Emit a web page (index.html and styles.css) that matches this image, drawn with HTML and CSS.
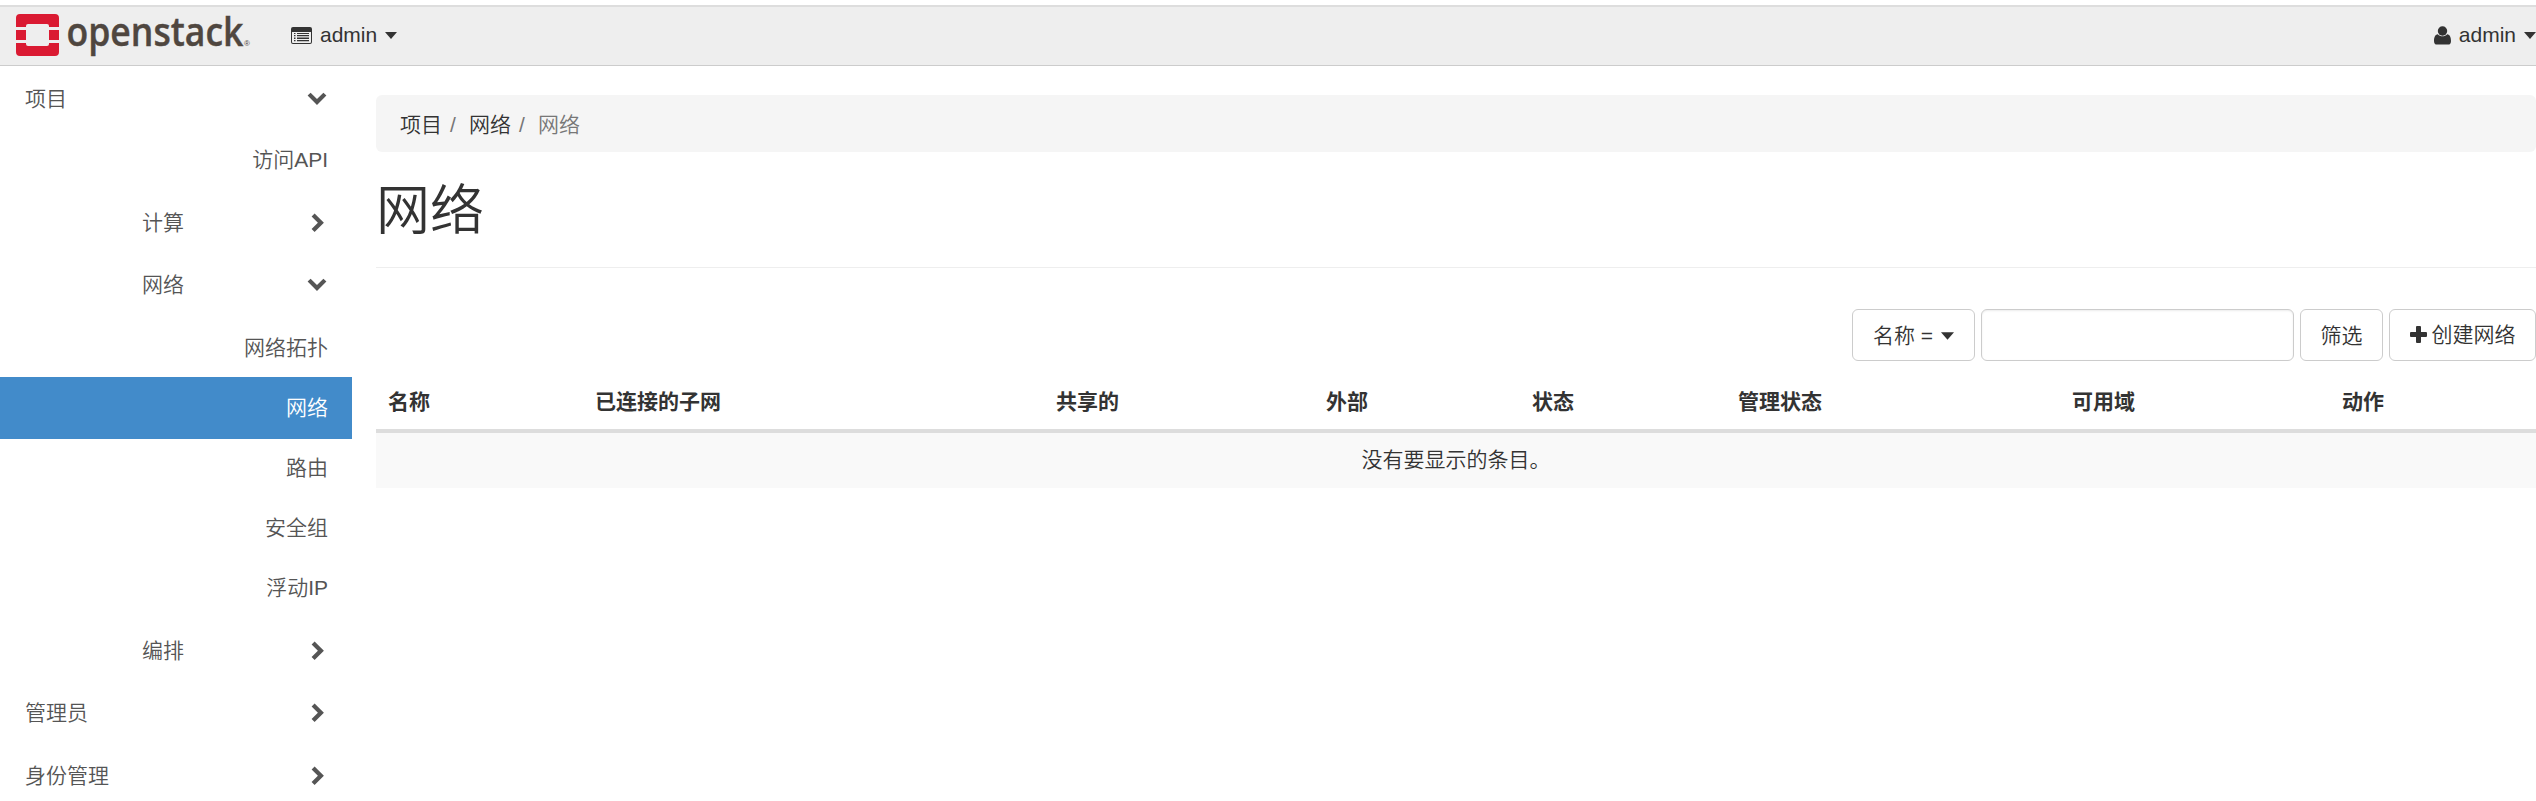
FILE: index.html
```html
<!DOCTYPE html>
<html lang="zh-CN">
<head>
<meta charset="utf-8">
<title>网络 - OpenStack Dashboard</title>
<link rel="stylesheet" href="styles.css">
</head>
<body>
<svg width="0" height="0" class="defs">
  <symbol id="down" viewBox="0 0 20 14"><path d="M.6 3.600 3.600.700 10 7 16.400.7 19.400 3.600 10 13z"/></symbol>
  <symbol id="right" viewBox="0 0 14 20"><path d="M3.600.4.6 3.400 6.900 9.700.6 16 3.600 19 12.900 9.700z"/></symbol>
  <symbol id="caret" viewBox="0 0 12 7"><path d="M0 0h12L6 7z"/></symbol>
</svg>
<header class="topbar">
  <svg class="logo" width="240" height="56" viewBox="0 -7 240 56">
    <path fill="#da1a32" d="M4 0h35a4 4 0 0 1 4 4v9H33v-1a2 2 0 0 0-2-2H12a2 2 0 0 0-2 2v1H0V4a4 4 0 0 1 4-4zM0 16h10v10H0zM33 16h10v10H33zM0 29h10v1a2 2 0 0 0 2 2h19a2 2 0 0 0 2-2v-1h10v9a4 4 0 0 1-4 4H4a4 4 0 0 1-4-4z"/>
    <text class="brand" x="50.500" y="31.500" textLength="177" lengthAdjust="spacingAndGlyphs">openstack</text>
    <text class="reg" x="228" y="31.500">®</text>
  </svg>
  <div class="context">
    <svg width="21" height="17" viewBox="0 0 21 17"><path fill="#333" fill-rule="evenodd" d="M2 0h17a2 2 0 0 1 2 2v13a2 2 0 0 1-2 2H2a2 2 0 0 1-2-2V2a2 2 0 0 1 2-2zM1 5V15a1 1 0 0 0 1 1h17a1 1 0 0 0 1-1V5z"/><path d="M3 6h1.500v1H3zM6 6h12v1H6zM3 8h1.500v1.200H3zM6 8h12v1.200H6zM3 10.500h1.500v1.500H3zM6 10.500h12v1.500H6zM3 13h1.500v1.200H3zM6 13h12v1.200H6z"/></svg>
    <span class="label">admin</span>
    <svg class="caret" width="12" height="7"><use href="#caret"/></svg>
  </div>
  <div class="user">
    <svg width="17" height="19" viewBox="0 0 17 19"><circle cx="8.500" cy="5" r="4.700"/><path d="M3.800 8.300C1 8.700 0 11.500 0 15c0 2.500 1 3.600 3 3.600h11c2 0 3-1.100 3-3.600 0-3.500-1-6.300-3.800-6.700-2.600 2.700-6.800 2.700-9.400 0z"/></svg>
    <span class="label">admin</span>
    <svg class="caret" width="12" height="7"><use href="#caret"/></svg>
  </div>
</header>
<div class="layout">
  <nav class="sidebar">
    <div class="item">项目<svg class="chev-down" width="20" height="14"><use href="#down"/></svg></div>
    <div class="item leaf">访问API</div>
    <div class="item group">计算<svg class="chev-right" width="14" height="20"><use href="#right"/></svg></div>
    <div class="item group">网络<svg class="chev-down" width="20" height="14"><use href="#down"/></svg></div>
    <div class="panels">
      <div class="item leaf">网络拓扑</div>
      <div class="item leaf active">网络</div>
      <div class="item leaf">路由</div>
      <div class="item leaf">安全组</div>
      <div class="item leaf">浮动IP</div>
    </div>
    <div class="item group">编排<svg class="chev-right" width="14" height="20"><use href="#right"/></svg></div>
    <div class="item">管理员<svg class="chev-right" width="14" height="20"><use href="#right"/></svg></div>
    <div class="item last">身份管理<svg class="chev-right" width="14" height="20"><use href="#right"/></svg></div>
  </nav>
  <main class="content">
    <div class="breadcrumb"><span>项目</span><i>/</i><span>网络</span><i>/</i><span class="current">网络</span></div>
    <h1>网络</h1>
    <div class="actions">
      <button class="btn filter">名称 = <svg class="caret" width="13" height="8" viewBox="0 0 12 7"><path d="M0 0h12L6 7z"/></svg></button>
      <input class="search" type="text">
      <button class="btn submit">筛选</button>
      <button class="btn create"><svg width="17" height="17" viewBox="0 0 17 17"><path d="M6 1a1 1 0 0 1 1-1h3a1 1 0 0 1 1 1v5h5a1 1 0 0 1 1 1v3a1 1 0 0 1-1 1h-5v5a1 1 0 0 1-1 1H7a1 1 0 0 1-1-1v-5H1a1 1 0 0 1-1-1V7a1 1 0 0 1 1-1h5z"/></svg>创建网络</button>
    </div>
    <table class="networks">
      <colgroup><col class="c1"><col class="c2"><col class="c3"><col class="c1"><col class="c1"><col class="c4"><col class="c3"><col class="c1"></colgroup>
      <thead><tr><th>名称</th><th>已连接的子网</th><th>共享的</th><th>外部</th><th>状态</th><th>管理状态</th><th>可用域</th><th>动作</th></tr></thead>
      <tbody><tr><td colspan="8">没有要显示的条目。</td></tr></tbody>
    </table>
  </main>
</div>
</body>
</html>
```
FILE: styles.css
```css
* { box-sizing: border-box; }
body {
  margin: 0;
  height: 801px;
  overflow: hidden;
  background: #fff;
  color: #333;
  font: 350 21px/30px "Liberation Sans", "Noto Sans CJK SC", sans-serif;
}
svg { flex: none; fill: currentColor; }
.defs { display: block; height: 0; }
.topbar {
  display: flex;
  align-items: flex-start;
  height: 61px;
  margin-top: 5px;
  padding-left: 16px;
  background: #eee;
  border-top: 2px solid #ddd;
  border-bottom: 1px solid #ccc;
}
.logo { overflow: visible; }
.brand { font: 600 39px/1 "Open Sans", sans-serif; fill: #4f463f; stroke: #4f463f; stroke-width: .4px; }
.reg { font: 8px/1 "Liberation Sans", sans-serif; fill: #4f463f; }
.context, .user { display: flex; align-items: center; height: 56px; }
.context { margin-left: 35px; }
.user { margin-left: auto; }
.label { margin: 0 8px; }
.layout { display: flex; }
.sidebar { width: 352px; padding-top: 1px; color: #555; }
.item {
  display: flex;
  align-items: center;
  justify-content: space-between;
  height: 62px;
  padding: 1px 24px 0 25px;
}
.chev-down { margin-right: 1px; }
.chev-right { margin-right: 3px; }
.group { padding-left: 142px; }
.leaf { justify-content: flex-end; padding-top: 0; }
.last { height: 64px; }
.panels { padding: 2px 0; }
.panels .item { height: 60px; padding-top: 1px; }
.panels .item.active { height: 62px; margin-bottom: -2px; padding: 0 24px 1px; background: #428bca; color: #fff; }
.content { width: 2160px; margin-left: 24px; padding-top: 29px; }
.breadcrumb {
  display: flex;
  align-items: center;
  height: 57px;
  padding: 2px 0 0 24px;
  border-radius: 6px;
  background: #f5f5f5;
}
.breadcrumb i { width: 27px; padding-left: 8px; font-style: normal; color: #777; }
.current { color: #777; }
h1 {
  height: 116px;
  margin: 0;
  padding-top: 30px;
  border-bottom: 1px solid #eee;
  font-size: 54px;
  font-weight: 350;
  line-height: 59px;
}
.actions { display: flex; justify-content: flex-end; gap: 6px; margin-top: 41px; }
.btn, .search { height: 52px; border: 1px solid #ccc; border-radius: 6px; background: #fff; }
.btn {
  display: flex;
  align-items: center;
  justify-content: center;
  padding: 0;
  color: #333;
  font: inherit;
}
.filter { width: 123px; gap: 8px; padding-top: 1px; }
.search { width: 313px; box-shadow: inset 0 1px 2px rgba(0, 0, 0, .08); }
.submit { width: 83px; padding-top: 1px; }
.create { width: 147px; gap: 5px; }
.create svg { margin-bottom: 2px; }
.networks { width: 2160px; table-layout: fixed; border-collapse: separate; border-spacing: 0; }
.c1 { width: 206px; }
.c1:first-child { width: 207px; }
.c2 { width: 461px; }
.c3 { width: 270px; }
.c4 { width: 334px; }
th {
  height: 72px;
  padding: 13px 12px 0;
  border-bottom: 4px solid #ddd;
  text-align: left;
  font-weight: 700;
}
td { height: 55px; padding: 0 0 2px; background: #f9f9f9; text-align: center; }
```
